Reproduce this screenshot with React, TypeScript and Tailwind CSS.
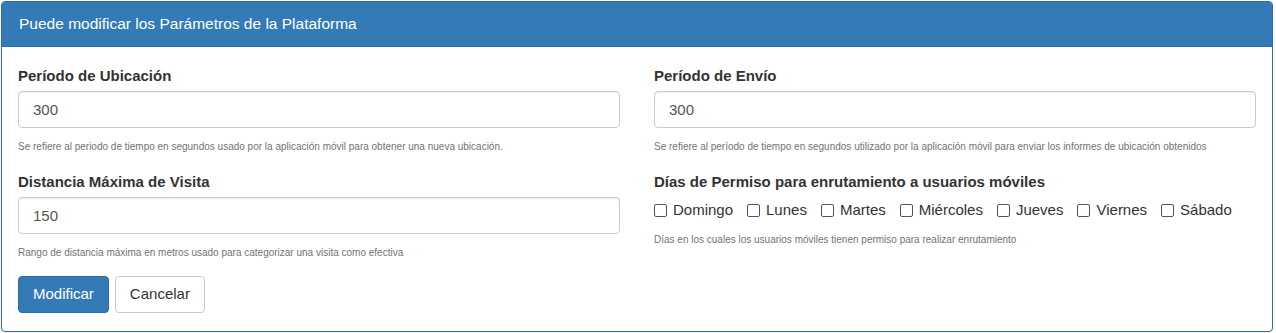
import React, { useState } from 'react';

const font = "font-['Liberation_Sans',Arial,sans-serif]";

const dias = ['Domingo', 'Lunes', 'Martes', 'Miércoles', 'Jueves', 'Viernes', 'Sábado'];

function Field({ label, value, help, top }: { label: string; value: string; help: string; top: string }) {
  return (
    <div className={top}>
      <label className="block text-[15px] leading-[21px] font-bold text-[#333]">{label}</label>
      <input
        defaultValue={value}
        className="mt-[5px] block w-full h-[37px] px-[14px] text-[15px] text-[#555] bg-white border border-[#ccc] rounded-[4px] shadow-[inset_0_1px_1px_rgba(0,0,0,0.075)] outline-none"
      />
      <p className="mt-[12px] text-[10px] leading-[14px] text-[#737373]">{help}</p>
    </div>
  );
}

export default function App() {
  const [checked, setChecked] = useState<Record<string, boolean>>({});

  return (
    <div className={`${font} bg-white p-px`}>
      <div className="w-[1272px] border border-[#2e6da4] rounded-[4px] bg-white shadow-[0_1px_1px_rgba(0,0,0,0.05)]">
        <div className="h-[45px] flex items-center px-[17px] bg-[#337ab7] text-white text-[15.5px] rounded-t-[3px] border-b border-[#2e6da4]">
          Puede modificar los Parámetros de la Plataforma
        </div>

        <div className="px-[16px] pt-[18px] pb-[18px]">
          <div className="grid grid-cols-2 gap-x-[34px]">
            <div>
              <Field
                label="Período de Ubicación"
                value="300"
                help="Se refiere al periodo de tiempo en segundos usado por la aplicación móvil para obtener una nueva ubicación."
                top=""
              />
              <Field
                label="Distancia Máxima de Visita"
                value="150"
                help="Rango de distancia máxima en metros usado para categorizar una visita como efectiva"
                top="mt-[17px]"
              />
            </div>

            <div>
              <Field
                label="Período de Envío"
                value="300"
                help="Se refiere al período de tiempo en segundos utilizado por la aplicación móvil para enviar los informes de ubicación obtenidos"
                top=""
              />
              <div className="mt-[17px]">
                <label className="block text-[15px] leading-[21px] font-bold text-[#333]">
                  Días de Permiso para enrutamiento a usuarios móviles
                </label>
                <div className="mt-[8px] flex items-center gap-x-[14px] h-[20px]">
                  {dias.map((d) => (
                    <label key={d} className="flex items-center gap-[6px] text-[15px] text-[#333]">
                      <input
                        type="checkbox"
                        checked={!!checked[d]}
                        onChange={() => setChecked({ ...checked, [d]: !checked[d] })}
                        className="appearance-none w-[13px] h-[13px] border border-[#555] rounded-[2px] bg-white checked:bg-[#337ab7] checked:border-[#337ab7]"
                      />
                      {d}
                    </label>
                  ))}
                </div>
                <p className="mt-[13px] text-[10px] leading-[14px] text-[#737373]">
                  Días en los cuales los usuarios móviles tienen permiso para realizar enrutamiento
                </p>
              </div>
            </div>
          </div>

          <div className="mt-[16px] flex gap-[6px]">
            <button className="h-[37px] px-[14px] text-[15px] text-white bg-[#337ab7] border border-[#2e6da4] rounded-[4px]">
              Modificar
            </button>
            <button className="h-[37px] px-[14px] text-[15px] text-[#333] bg-white border border-[#ccc] rounded-[4px]">
              Cancelar
            </button>
          </div>
        </div>
      </div>
    </div>
  );
}
